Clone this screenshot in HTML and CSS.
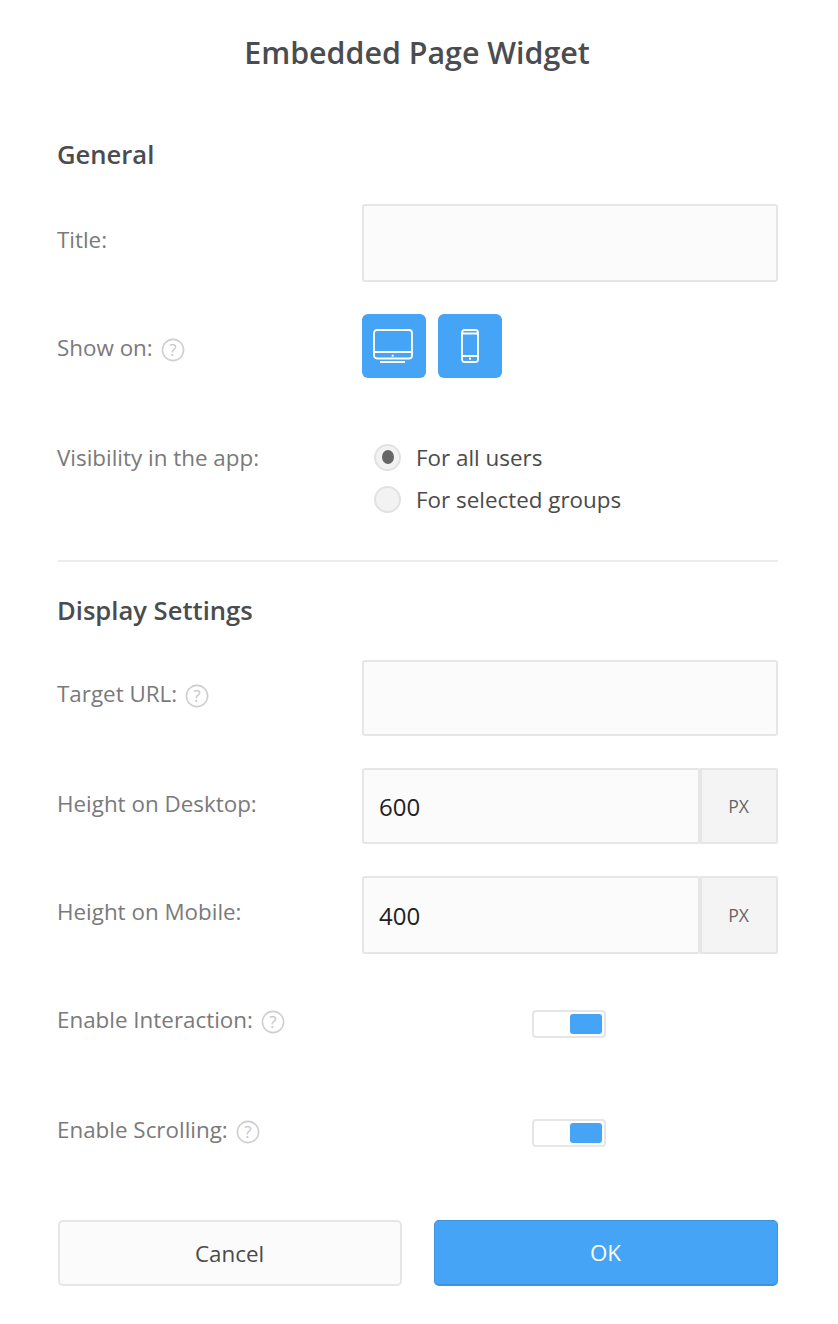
FILE: index.html
```html
<!DOCTYPE html>
<html lang="en">
<head>
<meta charset="utf-8">
<title>Embedded Page Widget</title>
<link rel="stylesheet" href="styles.css">
</head>
<body>
<main class="dialog">
  <h1 class="dialog-title">Embedded Page Widget</h1>

  <section class="section section-general">
    <h2 class="section-title">General</h2>
    <div class="row row-title">
      <label class="label">Title:</label>
      <div class="field"><input class="input" type="text"></div>
    </div>
    <div class="row row-show">
      <div class="label">Show on:
        <svg class="help" viewBox="0 0 24 24"><circle cx="12" cy="12" r="10.6"/><text x="12" y="17.8" text-anchor="middle">?</text></svg>
      </div>
      <div class="field devices">
        <button class="device" type="button" aria-label="Desktop">
          <svg class="device-icon device-icon-desktop" width="40" height="34" viewBox="0 0 40 34"><rect x="1" y="1" width="38" height="28.5" rx="3"/><path d="M1 23h38M7 33h25"/><rect class="dot" x="18.7" y="25.7" width="2" height="2"/></svg>
        </button>
        <button class="device" type="button" aria-label="Mobile">
          <svg class="device-icon" width="18" height="34" viewBox="0 0 18 34"><rect x="1" y="1" width="16" height="32" rx="2.5"/><path d="M1 4.5h16M1 27h16"/><rect class="dot" x="8" y="28.7" width="2" height="2"/></svg>
        </button>
      </div>
    </div>
    <div class="row row-vis">
      <div class="label">Visibility in the app:</div>
      <div class="field radios">
        <div class="radio-line"><span class="radio radio-on"></span><span class="radio-text">For all users</span></div>
        <div class="radio-line"><span class="radio"></span><span class="radio-text">For selected groups</span></div>
      </div>
    </div>
  </section>

  <hr class="divider">

  <section class="section">
    <h2 class="section-title">Display Settings</h2>
    <div class="row row-url">
      <div class="label">Target URL:
        <svg class="help" viewBox="0 0 24 24"><circle cx="12" cy="12" r="10.6"/><text x="12" y="17.8" text-anchor="middle">?</text></svg>
      </div>
      <div class="field"><input class="input input-short" type="text"></div>
    </div>
    <div class="row row-h1">
      <label class="label">Height on Desktop:</label>
      <div class="field group"><input class="input input-short group-input" type="text" value="600"><span class="unit">PX</span></div>
    </div>
    <div class="row row-h2">
      <label class="label">Height on Mobile:</label>
      <div class="field group"><input class="input group-input" type="text" value="400"><span class="unit">PX</span></div>
    </div>
    <div class="row row-t1">
      <div class="label">Enable Interaction:
        <svg class="help" viewBox="0 0 24 24"><circle cx="12" cy="12" r="10.6"/><text x="12" y="17.8" text-anchor="middle">?</text></svg>
      </div>
      <div class="field toggle-field"><span class="toggle"><span class="knob"></span></span></div>
    </div>
    <div class="row row-t2">
      <div class="label">Enable Scrolling:
        <svg class="help" viewBox="0 0 24 24"><circle cx="12" cy="12" r="10.6"/><text x="12" y="17.8" text-anchor="middle">?</text></svg>
      </div>
      <div class="field toggle-field"><span class="toggle"><span class="knob"></span></span></div>
    </div>
  </section>

  <footer class="actions">
    <button class="btn btn-cancel" type="button">Cancel</button>
    <button class="btn btn-ok" type="button">OK</button>
  </footer>
</main>
</body>
</html>
```
FILE: styles.css
```css
* { box-sizing: border-box; }
html, body { margin: 0; padding: 0; background: #fff; }
body { font-family: "Open Sans", "Liberation Sans", sans-serif; color: #4a4a4a; }
.dialog { width: 838px; height: 1324px; padding: 0 60px 0 58px; overflow: hidden; }
.dialog-title { margin: 0; padding: 32px 2px 0 0; height: 73px; line-height: 42px; font-size: 30.4px; font-weight: 600; text-align: center; color: #4a4c4f; }
.section-title { margin: 0 0 0 -1px; font-size: 25.6px; line-height: 34px; font-weight: 600; color: #4a4c4f; }
.section-general { padding-top: 65px; }
.row { display: flex; }
.label { flex: 0 0 305px; margin-left: -1px; font-size: 22.4px; line-height: 30px; color: #7a7a7a; display: flex; align-items: center; gap: 8px; align-self: flex-start; }
.field { flex: 1; min-width: 0; }
.help { width: 24px; height: 24px; flex: none; margin-top: 4px; }
.help circle { fill: none; stroke: #cfcfcf; stroke-width: 1.6; }
.help text { font-family: "Open Sans", sans-serif; font-size: 17px; fill: #c6c6c6; font-weight: 400; }
.input { display: block; width: 100%; height: 78px; border: 2px solid #e6e6e6; border-radius: 3px; background: #fbfbfb; padding: 0 15px; font: 400 24px "Open Sans", sans-serif; color: #222; outline: none; }
.input-short { height: 76px; }
.row-title { margin-top: 32px; }
.row-title .label { margin-top: 21px; }
.row-show { margin-top: 32px; }
.row-show .label { margin-top: 19px; }
.devices { display: flex; gap: 12px; }
.device { width: 64px; height: 64px; padding: 0; border: 0; border-radius: 6px; background: #45a4f6; display: flex; align-items: center; justify-content: center; }
.device-icon { flex: none; }
.device-icon-desktop { margin-right: 2px; }
.device-icon rect, .device-icon path { fill: none; stroke: #fff; stroke-width: 1.8; }
.device-icon .dot { fill: #fff; stroke: none; }
.row-vis { margin-top: 64px; }
.row-vis .label { margin-top: 1px; }
.radios { display: flex; flex-direction: column; gap: 12px; padding-left: 12px; }
.radio-line { display: flex; align-items: center; gap: 15px; height: 30px; }
.radio { width: 27px; height: 27px; flex: none; border-radius: 50%; background: #f2f2f2; border: 2px solid #e2e2e2; display: flex; align-items: center; justify-content: center; }
.radio-on::after { content: ""; width: 12px; height: 14px; border-radius: 50%; background: #666; }
.radio-text { padding-top: 2px; font-size: 22.4px; line-height: 30px; color: #4a4a4a; }
.divider { margin: 46px 0 0; border: 0; border-top: 2px solid #ececec; }
.divider + .section { padding-top: 32px; }
.row-url { margin-top: 32px; }
.row-url .label { margin-top: 19px; }
.row-h1 { margin-top: 32px; }
.row-h1 .label { margin-top: 21px; }
.row-h2 { margin-top: 32px; }
.row-h2 .label { margin-top: 21px; }
.group { display: flex; }
.group-input { flex: 1; min-width: 0; width: auto; border-radius: 3px 2px 2px 3px; }
.unit { flex: 0 0 78px; padding-right: 1px; display: flex; align-items: center; justify-content: center; background: #f4f4f4; border: 2px solid #e6e6e6; border-radius: 0 2px 2px 0; font-size: 17.6px; color: #666; }
.toggle-field { padding-left: 170px; }
.row-t1 { margin-top: 56px; }
.row-t1 .label { margin-top: -5px; }
.row-t2 { margin-top: 81px; }
.row-t2 .label { margin-top: -4px; }
.toggle { display: block; width: 74px; height: 28px; border: 2px solid #e6e6e6; border-radius: 4px; background: #fff; padding: 2px; position: relative; }
.knob { display: block; width: 32px; height: 20px; margin-left: 34px; border-radius: 3px; background: #45a4f6; }
.actions { display: grid; grid-template-columns: 1fr 1fr; gap: 32px; margin-top: 73px; }
.btn { height: 66px; padding: 0 1px 0 0; border-radius: 5px; font: 400 22.4px "Open Sans", sans-serif; }
.btn-cancel { background: #fbfbfb; border: 2px solid #e6e6e6; color: #4a4a4a; }
.btn-ok { background: #45a4f6; border: 2px solid #3d93de; border-width: 1px 1px 2px; color: #fff; }
```
